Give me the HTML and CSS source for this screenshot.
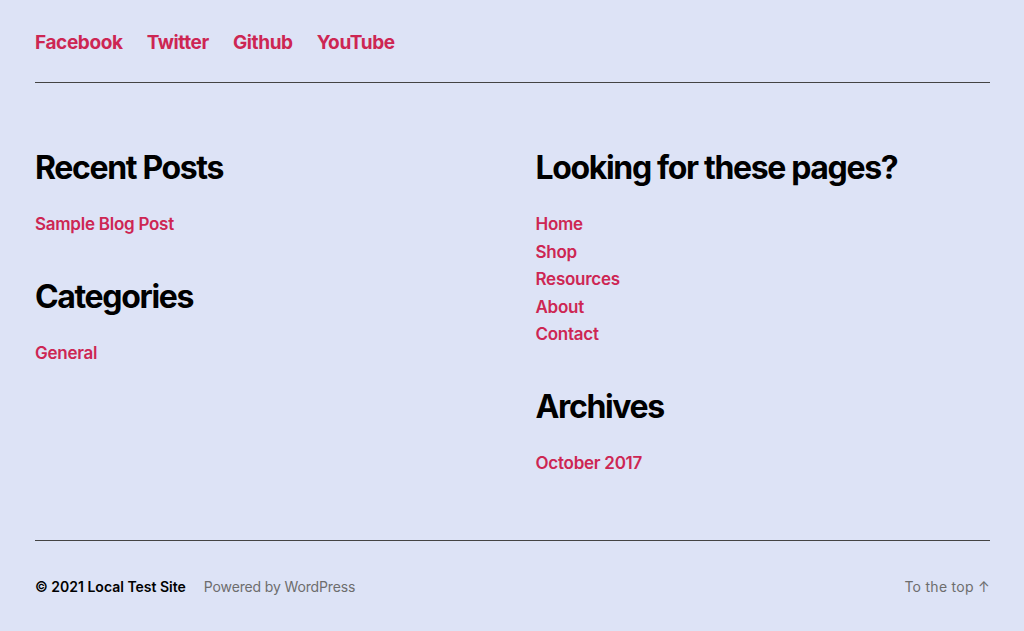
FILE: index.html
```html
<!DOCTYPE html>
<html lang="en">
<head>
<meta charset="utf-8">
<title>Footer</title>
<link rel="stylesheet" href="styles.css">
</head>
<body>
<footer class="site-footer">
  <nav class="social">
    <a href="#">Facebook</a>
    <a href="#">Twitter</a>
    <a href="#">Github</a>
    <a href="#">YouTube</a>
  </nav>
  <hr class="rule">
  <div class="widgets">
    <div class="col">
      <section class="widget">
        <h2>Recent Posts</h2>
        <ul><li><a href="#">Sample Blog Post</a></li></ul>
      </section>
      <section class="widget">
        <h2>Categories</h2>
        <ul><li><a href="#">General</a></li></ul>
      </section>
    </div>
    <div class="col">
      <section class="widget">
        <h2>Looking for these pages?</h2>
        <ul>
          <li><a href="#">Home</a></li>
          <li><a href="#">Shop</a></li>
          <li><a href="#">Resources</a></li>
          <li><a href="#">About</a></li>
          <li><a href="#">Contact</a></li>
        </ul>
      </section>
      <section class="widget">
        <h2>Archives</h2>
        <ul><li><a href="#">October 2017</a></li></ul>
      </section>
    </div>
  </div>
  <hr class="rule">
  <div class="credits">
    <div class="left">
      <span class="copy">© 2021 Local Test Site</span>
      <span class="powered">Powered by WordPress</span>
    </div>
    <a class="top" href="#">To the top ↑</a>
  </div>
</footer>
</body>
</html>
```
FILE: styles.css
```css
html, body {
  margin: 0;
  padding: 0;
  background: #dde3f6;
}
body {
  font-family: Inter, "Noto Sans", sans-serif;
  color: #000;
  width: 1024px;
  height: 631px;
  overflow: hidden;
}
a {
  text-decoration: none;
  color: #cd2653;
}
.site-footer {
  padding: 0 34px 0 35px;
}
.social {
  display: flex;
  gap: 24px;
  padding-top: 30px;
  height: 55px;
  box-sizing: border-box;
}
.social a {
  font-size: 19px;
  font-weight: 700;
  letter-spacing: -0.02em;
  line-height: 26px;
}
.rule {
  margin: 0;
  border: 0;
  border-top: 1px solid #444;
  height: 0;
}
.social + .rule {
  margin-top: 27px;
}
.widgets {
  display: grid;
  grid-template-columns: 1fr 1fr;
  column-gap: 46px;
  padding-top: 66px;
  height: 457px;
  box-sizing: border-box;
}
.widget h2 {
  margin: 0;
  font-size: 32px;
  font-weight: 700;
  letter-spacing: -0.042em;
  line-height: 38px;
}
.widget ul {
  list-style: none;
  margin: 0;
  padding: 0;
  margin-top: 24px;
}
.widget li {
  font-size: 17px;
  font-weight: 600;
  line-height: 27.5px;
  letter-spacing: -0.015em;
}
.widget + .widget {
  margin-top: 39px;
}
.credits {
  display: flex;
  justify-content: space-between;
  align-items: center;
  padding-top: 36px;
  font-size: 14px;
  line-height: 20px;
}
.left {
  display: flex;
  gap: 18px;
}
.copy {
  font-weight: 600;
  letter-spacing: 0;
}
.powered {
  color: #6d6d6d;
  letter-spacing: -0.01em;
}
.top {
  color: #6d6d6d;
  letter-spacing: 0.02em;
}
```
